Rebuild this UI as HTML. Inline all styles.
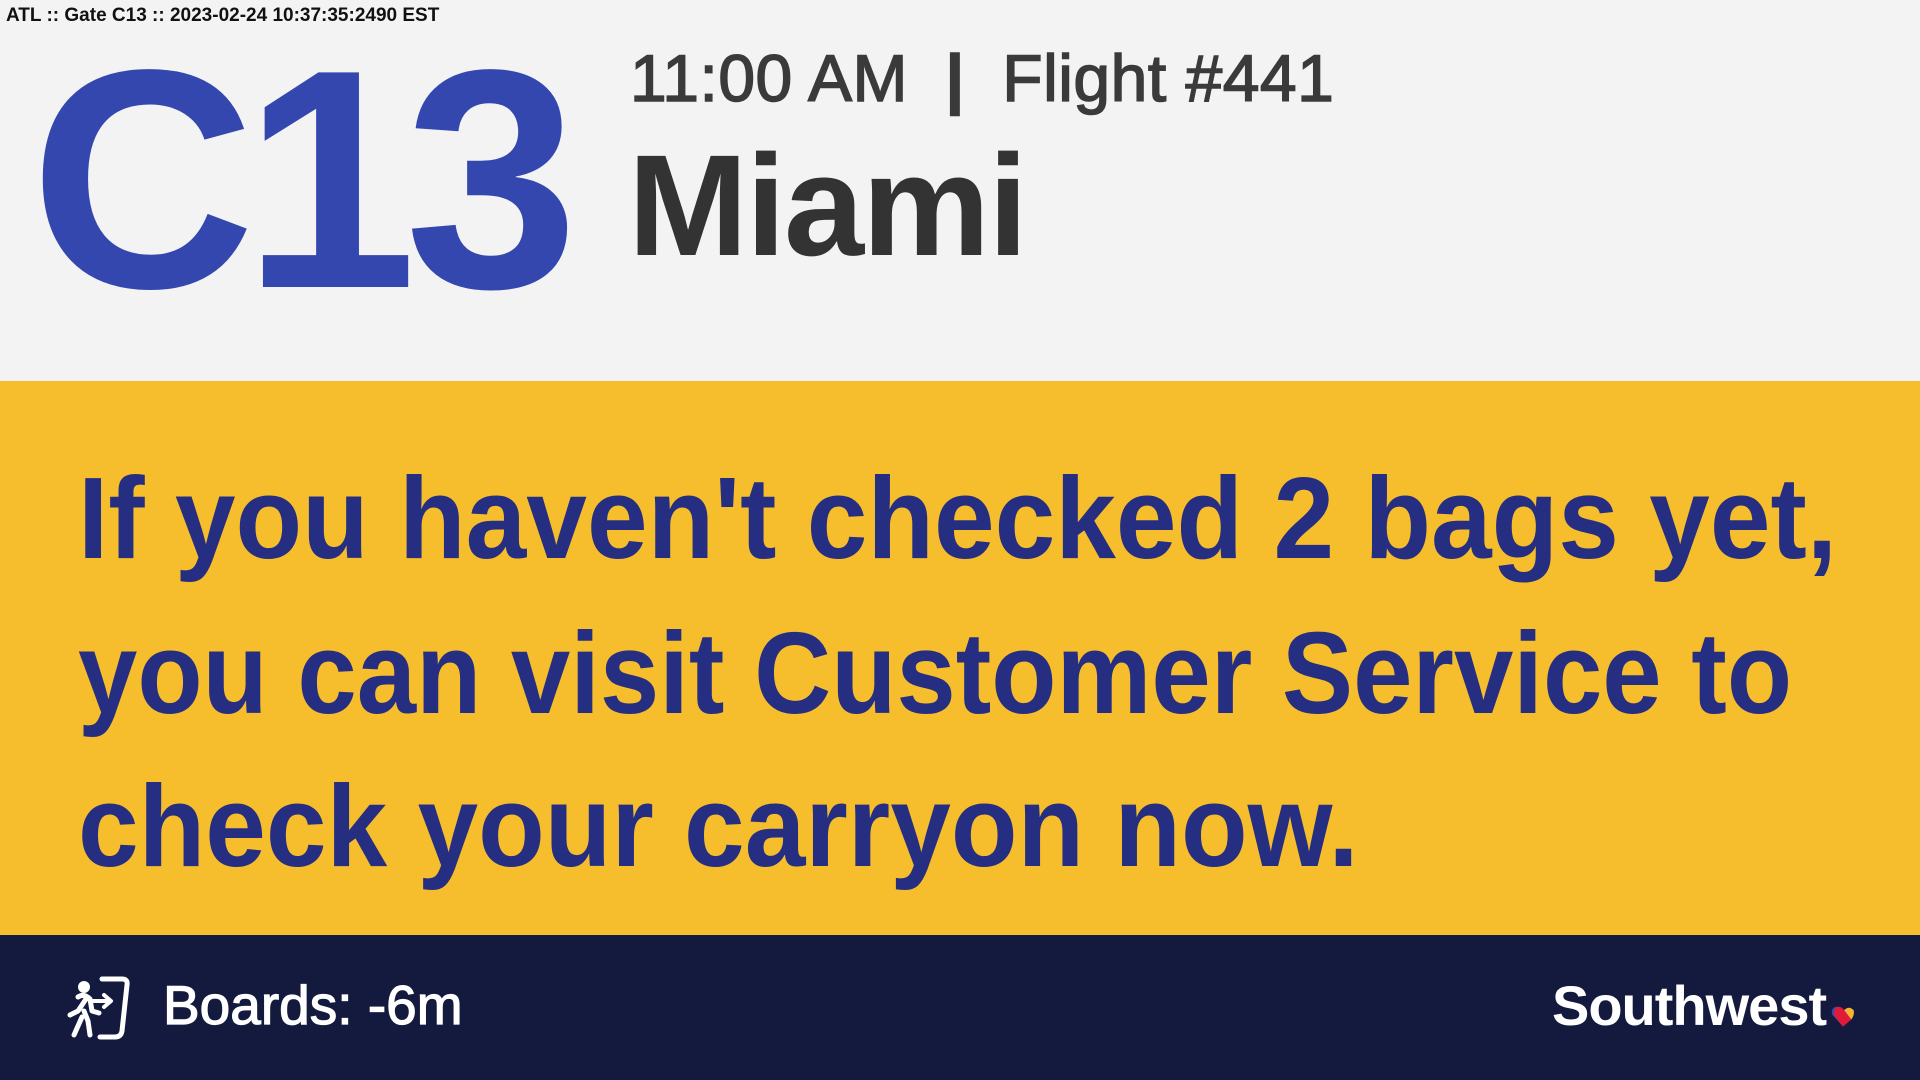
<!DOCTYPE html>
<html><head><meta charset="utf-8"><style>
*{margin:0;padding:0;box-sizing:border-box}
body{width:1920px;height:1080px;overflow:hidden;background:#f3f3f3;font-family:"Liberation Sans",sans-serif;position:relative}
.top{position:absolute;left:6px;top:5px;font-size:19px;font-weight:bold;color:#111}
.gate{position:absolute;left:30px;top:24px;font-size:312px;font-weight:bold;color:#3447ae;letter-spacing:-12px;line-height:1}
.time{position:absolute;left:630px;top:40px;font-size:66px;color:#3a3a3a;white-space:nowrap;-webkit-text-stroke:1.5px #3a3a3a;letter-spacing:0.5px}
.city{position:absolute;left:628px;top:127px;font-size:144px;font-weight:bold;color:#333;letter-spacing:-2px;line-height:1.1}
.band{position:absolute;left:0;top:381px;width:1920px;height:554px;background:#f6be2c}
.msg{position:absolute;left:78px;font-size:116px;font-weight:bold;color:#262e82;white-space:nowrap;transform-origin:left top;line-height:1}
.foot{position:absolute;left:0;top:935px;width:1920px;height:145px;background:#131a3d}
.boards{position:absolute;left:163px;top:978px;font-size:55px;color:#fff;line-height:1;-webkit-text-stroke:1.2px #fff}
.sw{position:absolute;left:1552px;top:978px;font-size:56px;font-weight:bold;color:#fff;letter-spacing:-1px;line-height:1}
</style></head><body>
<div class="top">ATL :: Gate C13 :: 2023-02-24 10:37:35:2490 EST</div>
<div class="gate">C13</div>
<div class="time">11:00 AM &nbsp;<b style="font-weight:bold">|</b>&nbsp; Flight #441</div>
<div class="city">Miami</div>
<div class="band"></div>
<div class="msg" style="top:460px;transform:scaleX(0.94)">If you haven't checked 2 bags yet,</div>
<div class="msg" style="top:615px;transform:scaleX(0.92)">you can visit Customer Service to</div>
<div class="msg" style="top:768px;transform:scaleX(0.94)">check your carryon now.</div>
<div class="foot"></div>
<svg style="position:absolute;left:64px;top:975px" width="68" height="66" viewBox="0 0 68 66">
<path d="M38 4 H58 Q64 4 63 10 L58 56 Q57 62 51 62 H36" fill="none" stroke="#fff" stroke-width="5" stroke-linecap="round"/>
<circle cx="20" cy="12" r="6" fill="#fff"/>
<path d="M14 22 Q20 18 26 24 L28 36 L35 38 M22 24 L14 36 L6 40 M20 36 L24 46 L26 60 M18 42 L10 60" fill="none" stroke="#fff" stroke-width="5" stroke-linecap="round" stroke-linejoin="round"/>
<path d="M28 26 H46 M40 20 L47 26 L40 32" fill="none" stroke="#fff" stroke-width="4" stroke-linecap="round" stroke-linejoin="round"/>
</svg>
<div class="boards">Boards: -6m</div>
<div class="sw">Southwest</div>
<svg style="position:absolute;left:1830px;top:1003px" width="26" height="26" viewBox="0 0 22 22">
<path d="M11 20 L2 10 Q0 4 6 3 L16 12 Z" fill="#304cb2"/>
<path d="M4 5 Q8 1 12 6 L18 14 L11 20 L3 10Z" fill="#e21a3a"/>
<path d="M12 6 Q16 2 20 6 Q21 10 18 14Z" fill="#f5b335"/>
</svg>
</body></html>
